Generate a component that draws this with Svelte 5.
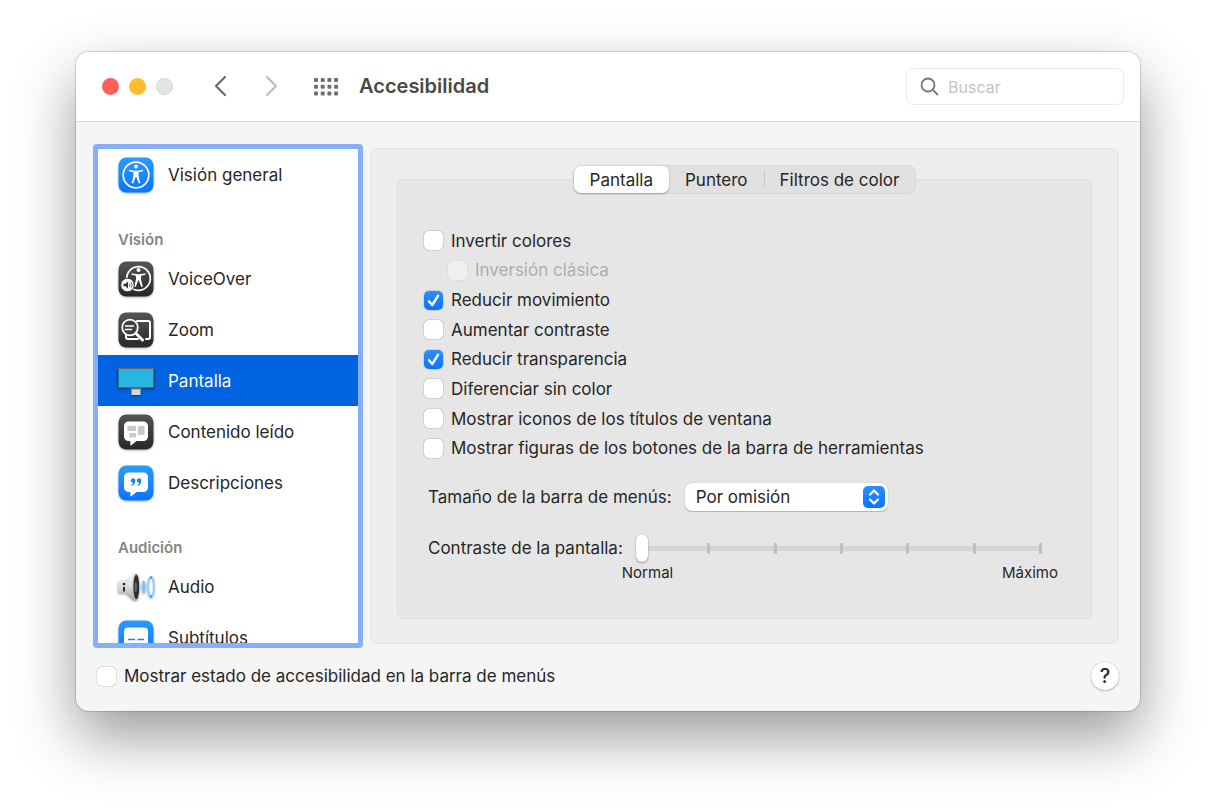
<script lang="ts">
  type SidebarItem = { id: string; label: string };
  type Section = { title: string; items: SidebarItem[] };

  const sections: Section[] = [
    { title: "", items: [{ id: "general", label: "Visión general" }] },
    {
      title: "Visión",
      items: [
        { id: "voiceover", label: "VoiceOver" },
        { id: "zoom", label: "Zoom" },
        { id: "pantalla", label: "Pantalla" },
        { id: "contenido", label: "Contenido leído" },
        { id: "descripciones", label: "Descripciones" },
      ],
    },
    {
      title: "Audición",
      items: [
        { id: "audio", label: "Audio" },
        { id: "subtitulos", label: "Subtítulos" },
      ],
    },
  ];

  const tabs = ["Pantalla", "Puntero", "Filtros de color"];

  let selected = $state("pantalla");
  let activeTab = $state("Pantalla");
  let query = $state("");
  let menuSize = $state("Por omisión");
  let contrast = $state(0);
  let showStatus = $state(false);

  let options = $state([
    { label: "Invertir colores", checked: false, disabled: false, nested: false },
    { label: "Inversión clásica", checked: false, disabled: true, nested: true },
    { label: "Reducir movimiento", checked: true, disabled: false, nested: false },
    { label: "Aumentar contraste", checked: false, disabled: false, nested: false },
    { label: "Reducir transparencia", checked: true, disabled: false, nested: false },
    { label: "Diferenciar sin color", checked: false, disabled: false, nested: false },
    { label: "Mostrar iconos de los títulos de ventana", checked: false, disabled: false, nested: false },
    { label: "Mostrar figuras de los botones de la barra de herramientas", checked: false, disabled: false, nested: false },
  ]);
</script>

{#snippet person()}
  <circle cx="20" cy="11.6" r="2" />
  <path d="M13.2 14.7c2.3.7 4.5 1 6.8 1s4.500-.3 6.800-1l.4 1.400c-1.600.6-3.100 1-4.700 1.200v3.400l1.800 7.500-1.500.4-2.500-6.800h-.6l-2.500 6.800-1.500-.4 1.800-7.500v-3.400c-1.600-.2-3.100-.6-4.700-1.200z" />
{/snippet}

{#snippet icon(id: string)}
  <svg class="icon" viewBox="0 0 40 40" aria-hidden="true">
    <defs>
      <linearGradient id="{id}-blue" x1="0" y1="0" x2="0" y2="1">
        <stop offset="0" stop-color="#2a9bff" />
        <stop offset="1" stop-color="#0a74ff" />
      </linearGradient>
      <linearGradient id="{id}-dark" x1="0" y1="0" x2="0" y2="1">
        <stop offset="0" stop-color="#555" />
        <stop offset="1" stop-color="#272727" />
      </linearGradient>
      <linearGradient id="{id}-metal" x1="0" y1="0" x2="0" y2="1">
        <stop offset="0" stop-color="#f6f6f6" />
        <stop offset="0.5" stop-color="#dcdcdc" />
        <stop offset="1" stop-color="#a2a2a2" />
      </linearGradient>
    </defs>
    {#if id === "general"}
      <rect x="2.500" y="2.500" width="35" height="35" rx="8" fill="url(#{id}-blue)" />
      <circle cx="20" cy="20" r="12.800" fill="none" stroke="#fff" stroke-width="1.700" />
      <g fill="#fff">{@render person()}</g>
    {:else if id === "voiceover"}
      <rect x="2.500" y="2.500" width="35" height="35" rx="8" fill="url(#{id}-dark)" />
      <circle cx="22.500" cy="19.500" r="11.800" fill="none" stroke="#fff" stroke-width="1.700" />
      <g fill="#fff" transform="translate(2.500 -.5)">{@render person()}</g>
      <circle cx="11.500" cy="26" r="6.800" fill="#fff" stroke="#393939" stroke-width="1" />
      <path d="M7.500 24.800h2l2.500-2.300v7l-2.500-2.300h-2z" fill="#333" />
      <path d="M13.200 24.400a2.500 2.500 0 0 1 0 3.200M14.900 23.200a4 4 0 0 1 0 5.600" fill="none" stroke="#555" stroke-width=".9" />
    {:else if id === "zoom"}
      <rect x="2.500" y="2.500" width="35" height="35" rx="8" fill="url(#{id}-dark)" />
      <path d="M21 11h11q2 0 2 2v14q0 2-2 2h-2M10 25v2q0 2 2 2h10" fill="none" stroke="#fff" stroke-width="2" stroke-linecap="round" />
      <circle cx="14" cy="17.500" r="7.800" fill="#404040" stroke="#fff" stroke-width="1.800" />
      <path d="M9.500 16h8M9.500 19.500h6" stroke="#fff" stroke-width="1.500" stroke-linecap="round" />
      <path d="M20 23.500l6.500 6.500" stroke="#fff" stroke-width="3" stroke-linecap="round" />
    {:else if id === "pantalla"}
      <path d="M15.500 27h9v7h-9z" fill="#d9d9d6" />
      <path d="M15.500 27h9v2h-9z" fill="#a8a8a8" />
      <rect x="1.500" y="7" width="37" height="20.500" fill="#2b3b44" />
      <rect x="2.500" y="8" width="35" height="18.500" fill="#27b6e2" />
      <path d="M1.500 7.300h37" stroke="#8f8078" stroke-width=".8" />
    {:else if id === "contenido"}
      <rect x="2.500" y="2.500" width="35" height="35" rx="8" fill="url(#{id}-dark)" />
      <path d="M12.500 9.500h15a4.500 4.500 0 0 1 4.500 4.500v10.500a4.500 4.500 0 0 1-4.500 4.500h-7l-5.200 4.200q-1 .6-1-.6v-3.600h-1.800A4.500 4.500 0 0 1 8 24.500V14a4.500 4.500 0 0 1 4.500-4.500z" fill="#fff" />
      <path d="M11.500 14h8.500v5h-8.500zM22 14h6.500v9H22zM13.500 21h6.500v4.500h-6.500z" fill="#c9c9c9" />
    {:else if id === "descripciones"}
      <rect x="2.500" y="2.500" width="35" height="35" rx="8" fill="url(#{id}-blue)" />
      <path d="M12.500 9.500h15a4.500 4.500 0 0 1 4.500 4.500v10.500a4.500 4.500 0 0 1-4.500 4.500h-7l-5.200 4.200q-1 .6-1-.6v-3.600h-1.800A4.500 4.500 0 0 1 8 24.500V14a4.500 4.500 0 0 1 4.500-4.500z" fill="#fff" />
      <path
        d="M17 15.200a2.300 2.300 0 0 1 2.300 2.500c0 2.600-1.500 4.500-3.800 5.100l-.4-.9c1.200-.5 1.900-1.200 2.100-2.100a2.300 2.300 0 1 1-.2-4.600zM23 15.200a2.300 2.300 0 0 1 2.300 2.500c0 2.600-1.500 4.500-3.800 5.100l-.4-.9c1.200-.5 1.900-1.200 2.100-2.100a2.300 2.300 0 1 1-.2-4.600z"
        fill="#1584ff"
      />
    {:else if id === "audio"}
      <path d="M4 13.500h5.500l7.500-6.500q1-.7 2.500-.7v27.400q-1.500 0-2.500-.7l-7.500-6.500H4q-2.200 0-2.200-3v-7q0-3 2.200-3z" fill="url(#{id}-metal)" />
      <ellipse cx="20" cy="20" rx="3.700" ry="13.700" fill="#c4c4c4" />
      <ellipse cx="20.300" cy="20" rx="2.900" ry="12.300" fill="#2e2e2e" />
      <ellipse cx="19.800" cy="20" rx="1.100" ry="5" fill="#6a6a6a" />
      <path d="M6.800 16h2.400v2.200H6.800zM7 20h2v4.500H7z" fill="#2b2b2b" />
      <ellipse cx="27.700" cy="20" rx="1.700" ry="6.500" fill="#6fc3f5" stroke="#a5cff8" />
      <ellipse cx="35" cy="20" rx="2.700" ry="10" fill="#fff" stroke="#9bc8fa" stroke-width="2" />
      <path d="M35 9.500v2.500M35 28v2.500" stroke="#1ea4f5" stroke-width="1.800" />
    {:else if id === "subtitulos"}
      <rect x="2.500" y="2.500" width="35" height="35" rx="8" fill="url(#{id}-blue)" />
      <rect x="8" y="9.500" width="24" height="21" rx="4" fill="#fff" />
      <path d="M12 21.500h7M21.500 21.500H28" stroke="#1584ff" stroke-width="1.500" />
    {/if}
  </svg>
{/snippet}

{#snippet tick()}
  <svg class="check__mark" viewBox="0 0 19 19" aria-hidden="true">
    <path d="M5 10.200l3.200 3.900 5.800-9.300" fill="none" stroke="#fff" stroke-width="2.400" stroke-linecap="round" stroke-linejoin="round" />
  </svg>
{/snippet}

<main class="desktop">
  <div class="window">
    <header class="titlebar">
      <div class="lights">
        <button type="button" class="light light--close" aria-label="Cerrar"></button>
        <button type="button" class="light light--min" aria-label="Minimizar"></button>
        <button type="button" class="light light--off" aria-label="Ampliar" disabled></button>
      </div>
      <div class="nav">
        <button type="button" class="nav__btn" aria-label="Atrás">
          <svg width="14" height="22" viewBox="0 0 14 22"><path d="M12 2L3 11l9 9" /></svg>
        </button>
        <button type="button" class="nav__btn" aria-label="Adelante" disabled>
          <svg width="14" height="22" viewBox="0 0 14 22"><path d="M2 2l9 9-9 9" /></svg>
        </button>
      </div>
      <button type="button" class="grid-btn" aria-label="Mostrar todo">
        <svg width="26" height="20" viewBox="0 0 26 20">
          {#each [0, 1, 2] as row}
            {#each [0, 1, 2, 3] as col}
              <rect x={1 + col * 6.7} y={1 + row * 6.7} width="4" height="4" rx="1" />
            {/each}
          {/each}
        </svg>
      </button>
      <h1 class="title">Accesibilidad</h1>
      <label class="search">
        <svg width="20" height="20" viewBox="0 0 20 20" aria-hidden="true">
          <circle cx="8" cy="8" r="6.500" /><path d="M12.800 12.800l4.700 4.700" />
        </svg>
        <input type="search" placeholder="Buscar" aria-label="Buscar" bind:value={query} />
      </label>
    </header>

    <div class="body">
      <div class="columns">
        <nav class="sidebar" aria-label="Categorías">
          {#each sections as section}
            {#if section.title}
              <h2 class="sidebar__title">{section.title}</h2>
            {/if}
            {#each section.items as item}
              <button
                type="button"
                class="item"
                class:item--selected={selected === item.id}
                onclick={() => (selected = item.id)}
              >
                {@render icon(item.id)}
                <span>{item.label}</span>
              </button>
            {/each}
          {/each}
        </nav>

        <section class="panel">
          <div class="tabs" role="tablist">
            {#each tabs as tab}
              <button
                type="button"
                role="tab"
                class="tab"
                class:tab--active={activeTab === tab}
                aria-selected={activeTab === tab}
                onclick={() => (activeTab = tab)}
              >
                {tab}
              </button>
            {/each}
          </div>

          <div class="group">
            <div class="options">
              {#each options as option}
                <label class="check" class:check--nested={option.nested} class:check--disabled={option.disabled}>
                  <span class="check__box">
                    <input type="checkbox" bind:checked={option.checked} disabled={option.disabled} />
                    {@render tick()}
                  </span>
                  <span>{option.label}</span>
                </label>
              {/each}
            </div>

            <div class="field">
              <label for="menu-size">Tamaño de la barra de menús:</label>
              <div class="select">
                <select id="menu-size" bind:value={menuSize}>
                  <option>Por omisión</option>
                  <option>Grande</option>
                </select>
                <svg viewBox="0 0 22 22" aria-hidden="true">
                  <path d="M7 8.500l4-4 4 4M7 13.500l4 4 4-4" />
                </svg>
              </div>
            </div>

            <div class="field field--slider">
              <label for="contrast">Contraste de la pantalla:</label>
              <div class="slider">
                <div class="slider__track">
                  {#each [0, 1, 2, 3, 4, 5, 6] as mark (mark)}
                    <span></span>
                  {/each}
                </div>
                <input id="contrast" type="range" min="0" max="6" bind:value={contrast} />
              </div>
              <div class="scale">
                <span>Normal</span>
                <span>Máximo</span>
              </div>
            </div>
          </div>
        </section>
      </div>

      <footer class="footer">
        <label class="check">
          <span class="check__box">
            <input type="checkbox" bind:checked={showStatus} />
            {@render tick()}
          </span>
          <span>Mostrar estado de accesibilidad en la barra de menús</span>
        </label>
        <button type="button" class="help" aria-label="Ayuda">?</button>
      </footer>
    </div>
  </div>
</main>

<style>
  :global(body) {
    margin: 0;
    background: #fff;
  }

  .desktop {
    box-sizing: border-box;
    min-height: 100vh;
    padding: 52px 76px 100px;
    font-family: Inter, "Liberation Sans", sans-serif;
    font-size: 17px;
    line-height: 20px;
    color: #262626;
  }

  button,
  input,
  select {
    margin: 0;
    padding: 0;
    border: 0;
    background: none;
    font: inherit;
    color: inherit;
  }

  .window {
    border-radius: 13px;
    background: #f5f5f5;
    box-shadow:
      0 0 1px 1px rgba(0, 0, 0, 0.15),
      0 26px 60px rgba(0, 0, 0, 0.4);
  }

  .titlebar {
    display: flex;
    align-items: center;
    height: 69px;
    padding: 0 16px 0 26px;
    border-bottom: 1px solid #dadada;
    border-radius: 13px 13px 0 0;
    background: #fff;
  }

  .lights {
    display: flex;
    gap: 10px;
  }

  .light {
    width: 17px;
    height: 17px;
    border-radius: 50%;
  }

  .light--close {
    background: #ff5f57;
  }

  .light--min {
    background: #febc2e;
  }

  .light--off {
    border: 1px solid #d3d3d3;
    background: #e4e4e4;
  }

  .nav {
    display: flex;
    gap: 38px;
    margin-left: 40px;
    padding-bottom: 2px;
  }

  .nav__btn,
  .grid-btn {
    display: flex;
  }

  .nav__btn path {
    fill: none;
    stroke: #6b6b6b;
    stroke-width: 2.2;
    stroke-linecap: round;
    stroke-linejoin: round;
  }

  .nav__btn:disabled path {
    stroke: #bdbdbd;
  }

  .grid-btn {
    margin-left: 34px;
    fill: #6f6f6f;
  }

  .title {
    flex: 1;
    margin: 0 0 0 20px;
    padding-bottom: 2px;
    font-size: 20px;
    line-height: 24px;
    font-weight: 600;
    color: #484848;
  }

  .search {
    display: flex;
    align-items: center;
    gap: 8px;
    box-sizing: border-box;
    width: 218px;
    height: 37px;
    padding: 0 12px 0 13px;
    border: 1px solid #ebebeb;
    border-radius: 7px;
  }

  .search svg {
    flex: none;
    fill: none;
    stroke: #777;
    stroke-width: 1.8;
    stroke-linecap: round;
  }

  .search input {
    flex: 1;
    min-width: 0;
    outline: none;
    font-size: 16px;
  }

  .search input::placeholder {
    color: #c3c3c3;
    opacity: 1;
  }

  .body {
    padding: 22px 21px 21px 17px;
  }

  .columns {
    display: flex;
    gap: 7px;
  }

  .sidebar {
    flex: none;
    contain: size;
    box-sizing: border-box;
    width: 270px;
    overflow: hidden;
    border: 5px solid #87aef7;
    border-radius: 4px;
    background: #fff;
  }

  .sidebar__title {
    margin: 0;
    padding: 30px 20px 3px;
    font-size: 15px;
    line-height: 20px;
    font-weight: 600;
    color: #858585;
  }

  .item {
    display: flex;
    align-items: center;
    gap: 12px;
    width: 100%;
    height: 51px;
    padding: 0 18px;
    text-align: left;
  }

  .item--selected {
    background: #0063e1;
    color: #fff;
  }

  .icon {
    flex: none;
    width: 40px;
    height: 40px;
    filter: drop-shadow(0 1px 1px rgba(0, 0, 0, 0.3));
  }

  .panel {
    flex: 1;
    min-width: 0;
    margin: 4px 0;
    padding: 16px 26px 24px;
    border: 1px solid #e5e5e5;
    border-radius: 7px;
    background: #ededed;
  }

  .tabs {
    position: relative;
    display: flex;
    width: fit-content;
    margin: 0 auto;
    border: 1px solid #d6d6d6;
    border-radius: 8px;
    background: #e1e1e1;
  }

  .tab {
    display: flex;
    align-items: center;
    height: 27px;
    padding: 0 16px;
    border-radius: 7px;
  }

  .tab--active {
    background: #fff;
    box-shadow: 0 1px 2px rgba(0, 0, 0, 0.3);
  }

  .tab:last-child::before {
    content: "";
    width: 1px;
    height: 17px;
    margin: 0 15px 0 -16px;
    background: #c9c9c9;
  }

  .group {
    margin-top: -15px;
    padding: 46px 26px 35px;
    border: 1px solid #dfdfdf;
    border-radius: 6px;
    background: #e6e6e6;
  }

  .options {
    display: grid;
    grid-auto-rows: 1fr;
    min-height: 237px;
  }

  .check {
    display: flex;
    align-items: center;
    gap: 8px;
  }

  .check--nested {
    margin-left: 24px;
  }

  .check--disabled {
    color: #adadad;
  }

  .check__box {
    display: grid;
    flex: none;
  }

  .check__box > :global(*) {
    grid-area: 1 / 1;
  }

  .check__box input {
    appearance: none;
    width: 19px;
    height: 19px;
    border-radius: 5px;
    background: #fff;
    box-shadow:
      0 0 0 1px rgba(0, 0, 0, 0.06),
      0 0 1px rgba(0, 0, 0, 0.3);
  }

  .check__box input:checked {
    background: linear-gradient(#2b90ff, #0a73ff);
  }

  .check__box input:disabled {
    background: #efefef;
    box-shadow: 0 0 0 1px rgba(0, 0, 0, 0.03);
  }

  .check__mark {
    width: 19px;
    height: 19px;
    visibility: hidden;
    pointer-events: none;
  }

  .check__box input:checked + .check__mark {
    visibility: visible;
  }

  .field {
    display: flex;
    align-items: center;
    gap: 13px;
    margin: 20px 0 0 4px;
  }

  .select {
    position: relative;
  }

  .select select {
    appearance: none;
    width: 203px;
    height: 28px;
    padding: 0 32px 0 11px;
    border-radius: 7px;
    background: #fff;
    box-shadow:
      0 0 1px rgba(0, 0, 0, 0.3),
      0 1px 1px rgba(0, 0, 0, 0.2);
  }

  .select svg {
    position: absolute;
    top: 3px;
    right: 3px;
    width: 22px;
    height: 22px;
    border-radius: 5px;
    background: linear-gradient(#2b90ff, #0a73ff);
    fill: none;
    stroke: #fff;
    stroke-width: 2.2;
    stroke-linecap: round;
    stroke-linejoin: round;
    pointer-events: none;
  }

  .field--slider {
    display: grid;
    grid-template-columns: auto 1fr;
    row-gap: 0;
    margin-top: 22px;
    margin-right: 19px;
  }

  .slider {
    position: relative;
  }

  .slider__track {
    position: absolute;
    inset: 10px 4px 9px 5px;
    display: flex;
    align-items: center;
    justify-content: space-between;
    background: linear-gradient(#d3d5d6, #d3d5d6) center / 100% 5px no-repeat;
  }

  .slider__track span {
    width: 3px;
    height: 11px;
    border-radius: 1px;
    background: #bfbfbf;
  }

  .slider input {
    position: relative;
    display: block;
    appearance: none;
    width: 100%;
    height: 30px;
  }

  .slider input::-webkit-slider-thumb {
    appearance: none;
    width: 12px;
    height: 28px;
    border-radius: 6px;
    background: #fff;
    box-shadow:
      0 0 1px rgba(0, 0, 0, 0.4),
      0 1px 2px rgba(0, 0, 0, 0.3);
  }

  .scale {
    grid-column: 2;
    display: flex;
    justify-content: space-between;
    margin: 0 -12px 0 -14px;
    font-size: 15px;
  }

  .footer {
    display: flex;
    align-items: center;
    justify-content: space-between;
    margin-top: 14px;
    padding-left: 4px;
  }

  .help {
    width: 28px;
    height: 28px;
    border-radius: 50%;
    background: #fff;
    box-shadow:
      0 0 1px rgba(0, 0, 0, 0.3),
      0 1px 2px rgba(0, 0, 0, 0.25);
    font-size: 20px;
    font-weight: 500;
  }
</style>
